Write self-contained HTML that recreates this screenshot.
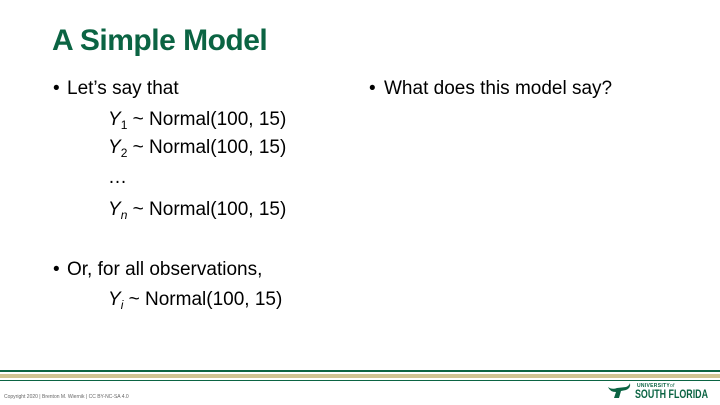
<!DOCTYPE html>
<html><head><style>
body{margin:0;width:720px;height:405px;background:#fff;position:relative;overflow:hidden;font-family:"Liberation Sans",sans-serif;}
.t{position:absolute;white-space:nowrap;font-size:19px;color:#000;line-height:20px;}
h1{position:absolute;left:52px;top:24px;margin:0;font-size:30px;font-weight:bold;color:#0b6443;letter-spacing:-0.5px;white-space:nowrap}
sub{font-size:12px;vertical-align:-4px;line-height:0}
.bar{position:absolute;left:0;width:720px;}
</style></head><body>
<h1>A Simple Model</h1>
<div class="t" style="left:53px;top:79px">•</div><div class="t" style="left:67px;top:79px">Let’s say that</div>
<div class="t" style="left:108px;top:110px"><i>Y</i><sub>1</sub> ~ Normal(100, 15)</div>
<div class="t" style="left:108px;top:138px"><i>Y</i><sub>2</sub> ~ Normal(100, 15)</div>
<div class="t" style="left:108px;top:168px">…</div>
<div class="t" style="left:108px;top:200px"><i>Y<sub>n</sub></i> ~ Normal(100, 15)</div>
<div class="t" style="left:53px;top:260px">•</div><div class="t" style="left:67px;top:260px">Or, for all observations,</div>
<div class="t" style="left:108px;top:290px"><i>Y<sub>i</sub></i> ~ Normal(100, 15)</div>
<div class="t" style="left:369px;top:79px">•</div><div class="t" style="left:384px;top:79px">What does this model say?</div>
<div class="bar" style="top:370px;height:2px;background:#0b6443"></div>
<div class="bar" style="top:374px;height:4px;background:#cfc493"></div>
<div class="bar" style="top:380px;height:1px;background:#0b6443"></div>
<div style="position:absolute;left:4px;top:394px;font-size:5px;color:#666;white-space:nowrap">Copyright 2020 | Brenton M. Wiernik | CC BY-NC-SA 4.0</div>
<svg style="position:absolute;left:606px;top:383px" width="26" height="16" viewBox="0 0 26 16"><path d="M2 4 Q6 7 11 5 L20 4 Q23 3 24 0 Q25 5 20 7 L15 8 L13 15 L8 15 L10 9 Q4 9 2 4Z" fill="#0b6443"/></svg>
<div style="position:absolute;left:637px;top:383px;font-size:5px;font-weight:bold;color:#0b6443;letter-spacing:0.3px;white-space:nowrap">UNIVERSITY<span style="font-weight:normal">of</span></div>
<div style="position:absolute;left:635px;top:387px;font-size:12px;font-weight:bold;color:#0b6443;white-space:nowrap;transform:scaleX(0.74);transform-origin:left top">SOUTH FLORIDA</div>
</body></html>
